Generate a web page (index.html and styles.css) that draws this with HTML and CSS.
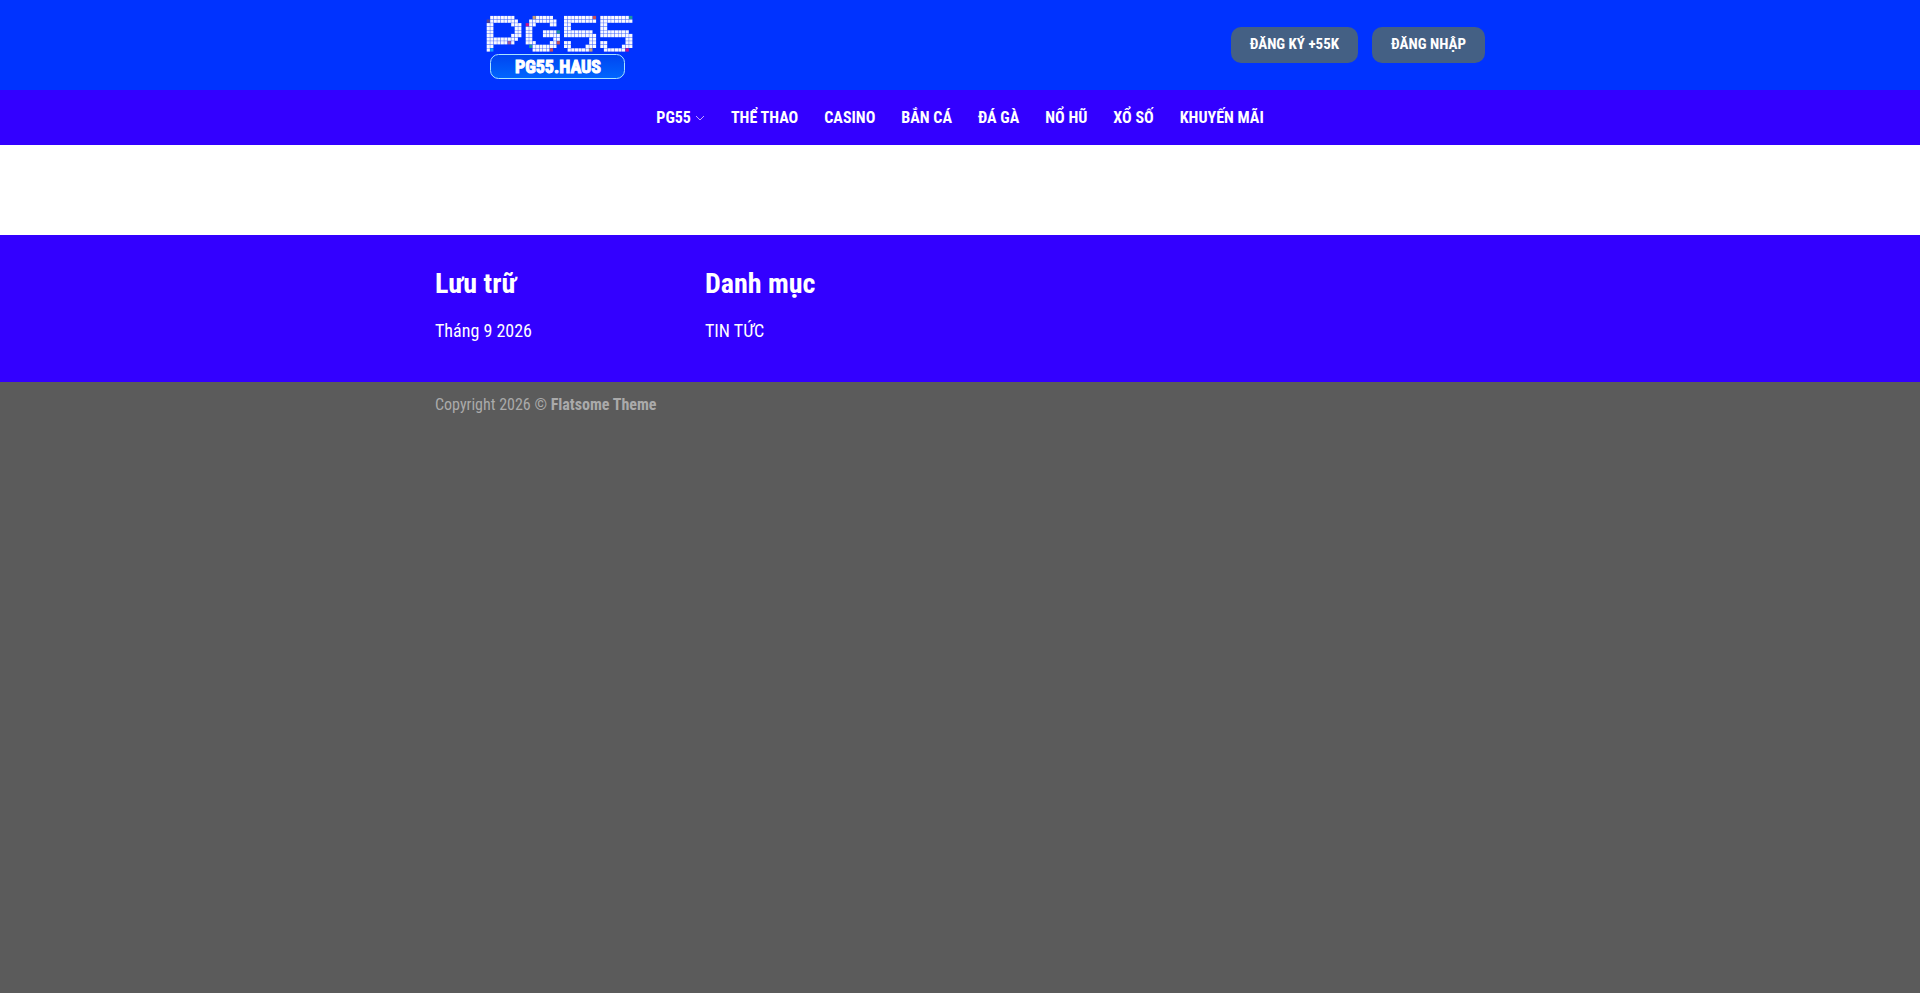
FILE: index.html
```html
<!DOCTYPE html>
<html lang="vi">
<head>
    <meta charset="UTF-8">
    <meta name="viewport" content="width=device-width, initial-scale=1.0">
    <title>PG55</title>
    <link rel="stylesheet" href="styles.css">
</head>
<body>
    <header>
        <div class="header-main">
            <div class="container header-inner">
                <a class="logo" href="#" aria-label="PG55">
                    <svg width="210" height="90" viewBox="0 0 210 90">
                        <defs>
                            <linearGradient id="badge" x1="0" y1="0" x2="0" y2="1">
                                <stop offset="0" stop-color="#0044f0"/>
                                <stop offset="1" stop-color="#0066ff"/>
                            </linearGradient>
                        </defs>
                        <g id="tiles"></g>
                        <rect x="55.5" y="54.5" width="134" height="24" rx="8" fill="url(#badge)" stroke="#a8e4ff"/>
                        <text x="123" y="73" class="logo-text">PG55.HAUS</text>
                    </svg>
                </a>
                <div class="header-buttons">
                    <a class="button" href="#">Đăng ký +55K</a>
                    <a class="button" href="#">Đăng nhập</a>
                </div>
            </div>
        </div>
        <nav class="header-bottom">
            <ul class="nav">
                <li><a href="#">PG55<svg class="arrow" width="10" height="8" viewBox="0 0 10 8"><path d="M1 1l4 4 4-4"/></svg></a></li>
                <li><a href="#">Thể thao</a></li>
                <li><a href="#">Casino</a></li>
                <li><a href="#">Bắn cá</a></li>
                <li><a href="#">Đá gà</a></li>
                <li><a href="#">Nổ hũ</a></li>
                <li><a href="#">Xổ số</a></li>
                <li><a href="#">Khuyến mãi</a></li>
            </ul>
        </nav>
    </header>
    <main></main>
    <footer>
        <div class="footer-widgets">
            <div class="columns">
                <div class="widget">
                    <h2>Lưu trữ</h2>
                    <a href="#">Tháng 9 2026</a>
                </div>
                <div class="widget">
                    <h2>Danh mục</h2>
                    <a href="#">TIN TỨC</a>
                </div>
            </div>
        </div>
        <div class="container copyright">Copyright 2026 © <strong>Flatsome Theme</strong></div>
    </footer>
    <script>
        // logo mosaic: # is a white tile, letters are accent colours
        const colors = { "#": "#f8f8ff", r: "#c8505a", p: "#c8148c", o: "#c8a078", t: "#1e96a0", b: "#14a0ff", d: "#5a468c", v: "#a05aa0" };
        const blocks = [
            { x: 51.7, pitch: 3.5, rows: [".#######..", "d########.", "##.....###", "##......##", "##......##", "##.....###", "#########.", "######v#..", "##........", "#b........"] },
            { x: 90.7, pitch: 3.45, rows: ["..o#####..", ".########.", "p##....##.", "##........", "##...####t", "##...#####", "##......##", "###....##r", ".t#######.", "..#####r.."] },
            { x: 129, pitch: 3.6, rows: ["########r", "#########", "##.......", "##.......", "########.", "#########", ".......##", "##.....##", "##....###", ".######o."] },
            { x: 165.3, pitch: 3.6, rows: ["########t", "#########", "##.......", "##.......", "########.", "#########", ".......##", "##.....##", "##....###", ".######p."] }
        ];
        const tiles = document.getElementById("tiles");
        blocks.forEach(block => {
            block.rows.forEach((row, y) => {
                [...row].forEach((c, x) => {
                    if (c === ".") return;
                    const rect = document.createElementNS("http://www.w3.org/2000/svg", "rect");
                    rect.setAttribute("x", block.x + x * block.pitch);
                    rect.setAttribute("y", 15.9 + y * 3.6);
                    rect.setAttribute("width", block.pitch - 0.3);
                    rect.setAttribute("height", 3.3);
                    rect.setAttribute("fill", colors[c]);
                    tiles.appendChild(rect);
                });
            });
        });
    </script>
</body>
</html>
```
FILE: styles.css
```css
* { box-sizing: border-box; }
body {
    margin: 0;
    background-color: #5b5b5b;
    color: #fff;
    font-family: "Roboto Condensed", Roboto, sans-serif;
    font-size: 16px;
}
a { color: inherit; text-decoration: none; }
.container {
    max-width: 1080px;
    margin: 0 auto;
    padding: 0 15px;
}
.header-main { background-color: #0033ff; }
.header-inner {
    display: flex;
    align-items: center;
    justify-content: space-between;
}
.logo svg { display: block; }
.logo-text {
    font-size: 18px;
    font-weight: 700;
    text-anchor: middle;
    fill: #fff;
    stroke: #fff;
    stroke-width: 1px;
}
.header-buttons { display: flex; gap: 14px; }
.button {
    padding: 0 19px 2px;
    border-radius: 10px;
    background-color: #446084;
    font-size: 15px;
    font-weight: 700;
    line-height: 34px;
    text-transform: uppercase;
}
.header-bottom { background-color: #3300ff; }
.nav {
    display: flex;
    flex-wrap: wrap;
    justify-content: center;
    gap: 0 26px;
    margin: 0;
    padding: 0;
    list-style: none;
    font-weight: 700;
    line-height: 55px;
    text-transform: uppercase;
}
.arrow {
    margin-left: 4px;
    vertical-align: middle;
    fill: none;
    stroke: #c4a8ff;
}
main { min-height: 90px; background-color: #fff; }
.footer-widgets {
    padding: 30px 0 37px;
    background-color: #3300ff;
}
.columns {
    display: grid;
    grid-template-columns: repeat(4, 1fr);
    max-width: 1080px;
    margin: 0 auto;
}
.widget {
    padding: 0 15px;
    font-size: 18px;
    line-height: 28px;
}
h2 {
    margin: 0 0 14px;
    font-size: 28px;
    line-height: 38px;
}
.copyright {
    padding: 10px 15px;
    color: #aaa;
    line-height: 26px;
}
```
